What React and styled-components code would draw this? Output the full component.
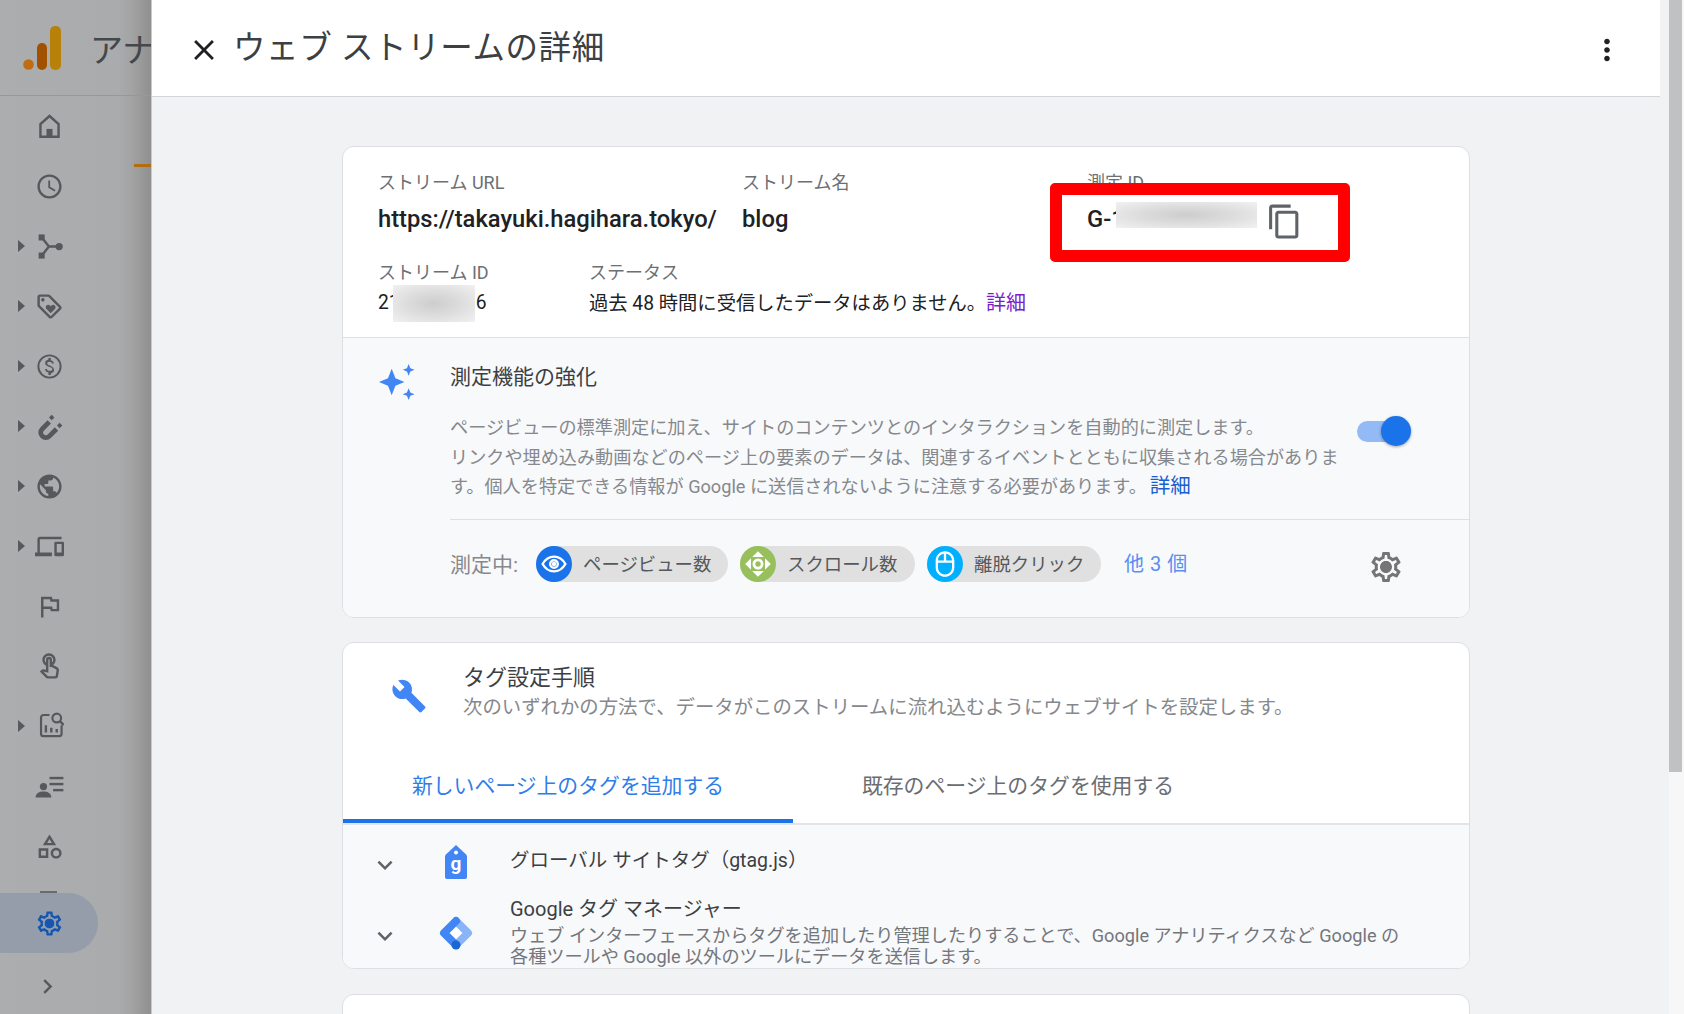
import React from "react";
import styled, { createGlobalStyle } from "styled-components";
import {
  MdOutlineSchedule,
  MdOutlineLoyalty,
  MdPublic,
  MdOutlineDevices,
  MdOutlineFlag,
  MdOutlineTouchApp,
  MdOutlineCategory,
  MdOutlineSettings,
  MdChevronRight,
  MdContentCopy,
  MdBuild,
  MdClose,
  MdMoreVert,
  MdOutlineMouse,
  MdExpandMore,
} from "react-icons/md";

const GlobalStyle = createGlobalStyle`
  html, body {
    margin: 0;
    padding: 0;
    height: 100%;
    overflow: hidden;
    font-family: Roboto, "Noto Sans CJK JP", sans-serif;
  }
`;

const Page = styled.div`
  display: flex;
  width: 100vw;
  height: 100vh;
  overflow: hidden;
  background: #f1f2f4;
`;

/* left nav, dimmed by the panel's scrim */
const Nav = styled.nav`
  flex: none;
  width: 151px;
  overflow: hidden;
  border-right: 1px solid #c8c9ca;
  background: linear-gradient(to right, #acadaf 0, #aaabad 118px, #a3a3a4 132px, #8f8f8f 151px);
`;

const NavHeader = styled.div`
  display: flex;
  align-items: center;
  height: 95px;
  padding-left: 23px;
  border-bottom: 1px solid #979899;
  white-space: nowrap;
  position: relative;

  svg {
    flex: none;
  }

  &::after {
    content: "";
    position: absolute;
    right: 0;
    bottom: -72px;
    width: 17px;
    height: 3px;
    background: #b06e10;
  }
`;

const NavTitle = styled.span`
  margin-left: 29px;
  font-size: 33px;
  color: #44474c;
`;

const NavItem = styled.div`
  display: grid;
  grid-template-columns: 35px 29px;
  align-items: center;
  height: 60px;
  color: #56585b;
  font-size: 29px;

  svg {
    display: block;
  }
`;

const Caret = styled.span`
  width: 0;
  height: 0;
  margin-left: 18px;
  border-left: 7px solid #56595e;
  border-top: 6px solid transparent;
  border-bottom: 6px solid transparent;
`;

const ActiveNav = styled(NavItem)`
  position: relative;
  width: 98px;
  margin-top: 17px;
  border-radius: 0 30px 30px 0;
  background: #959dab;
  color: #1557b0;

  &::before {
    content: "";
    position: absolute;
    left: 40px;
    top: -2px;
    width: 17px;
    height: 2px;
    background: #6a6b6d;
  }
`;

const CollapseNav = styled(NavItem)`
  margin-top: 3px;
  grid-template-columns: 33px 29px;
`;

/* outlined gear with the solid hub the reference shows */
const Gear = styled.span`
  position: relative;
  display: inline-flex;

  &::after {
    content: "";
    position: absolute;
    left: 35%;
    top: 35%;
    width: 30%;
    height: 30%;
    border-radius: 50%;
    background: currentColor;
  }
`;

const Panel = styled.main`
  flex: 1;
  min-width: 0;
  display: flex;
  flex-direction: column;
`;

const PanelHeader = styled.header`
  flex: none;
  display: flex;
  align-items: center;
  height: 97px;
  margin-right: 9px;
  padding: 0 36px 0 35px;
  box-sizing: border-box;
  background: #fff;
  border-bottom: 1px solid #d4d5d8;
  color: #202124;
`;

const CloseButton = styled.span`
  display: flex;
  font-size: 34px;
  margin-top: 3px;
`;

const PanelTitle = styled.h1`
  flex: 1;
  margin: -7px 0 0 12px;
  font-size: 32.5px;
  font-weight: 400;
  letter-spacing: 0.6px;
  color: #3c4043;
`;

const MoreButton = styled.span`
  display: flex;
  font-size: 34px;
  margin-top: 3px;
`;

const Content = styled.div`
  flex: 1;
  padding: 49px 0 0 190px;
  overflow: hidden;
`;

const Card = styled.section`
  position: relative;
  width: 1128px;
  margin-bottom: ${(p) => p.$gap || 0}px;
  box-sizing: border-box;
  border: 1px solid #dddfe3;
  border-radius: 12px;
  background: #fff;
  overflow: hidden;
  height: ${(p) => p.$height}px;
`;

const InfoSection = styled.div`
  padding: 24px 0 19px 35px;
  border-bottom: 1px solid #dddfe3;
`;

const InfoRow = styled.div`
  display: flex;
  margin-top: ${(p) => p.$top || 0}px;
`;

const Field = styled.div`
  width: ${(p) => p.$width}px;
  flex: none;
`;

const Label = styled.div`
  height: 24px;
  line-height: 24px;
  font-size: 18px;
  color: #6c6f74;
`;

const Value = styled.div`
  position: relative;
  height: 30px;
  line-height: 30px;
  margin-top: ${(p) => p.$top || 0}px;
  font-size: ${(p) => p.$size || 19.3}px;
  font-weight: ${(p) => p.$weight || 400};
  color: #202124;
  white-space: nowrap;
`;

const BlurPatch = styled.span`
  position: absolute;
  left: ${(p) => p.$left}px;
  top: ${(p) => p.$top}px;
  width: ${(p) => p.$width}px;
  height: ${(p) => p.$height}px;
  background: radial-gradient(ellipse at center, #cdcdcd 0, #dcdcdc 45%, #f1f1f1 100%);
`;

const TrailingDigit = styled.span`
  margin-left: 76px;
`;

const PurpleLink = styled.a`
  font-size: 20px;
  color: #7b1fc9;
`;

const IdCopy = styled.span`
  position: absolute;
  left: 179px;
  top: -1px;
  font-size: 37px;
  color: #5f6368;
  display: flex;
`;

const RedBox = styled.div`
  position: absolute;
  left: 707px;
  top: 36px;
  width: 300px;
  height: 79px;
  box-sizing: border-box;
  border: 12px solid #ff0000;
  border-radius: 5px;
`;

const FeatureSection = styled.div`
  display: flex;
  background: #f8f9fb;
`;

const FeatureIcon = styled.div`
  flex: none;
  width: 107px;
  padding: 26px 0 0 36px;
  box-sizing: border-box;
`;

const FeatureBody = styled.div`
  flex: 1;
  padding-top: 24px;
`;

const FeatureTitle = styled.h2`
  margin: 0;
  height: 30px;
  line-height: 30px;
  font-size: 21px;
  font-weight: 400;
  color: #3c4043;
`;

const DescRow = styled.div`
  display: flex;
  margin-top: 21px;
  padding-bottom: 17px;
  border-bottom: 1px solid #dfe0e3;
`;

const Desc = styled.p`
  flex: none;
  width: 907px;
  margin: 0;
  font-size: 18.15px;
  line-height: 29.5px;
  color: #85888d;
  white-space: nowrap;
`;

const BlueLink = styled.a`
  margin-left: 3px;
  font-size: 20.5px;
  color: #1a5fd0;
`;

const Toggle = styled.div`
  position: relative;
  width: 54px;
  height: 30px;
  margin-top: 3px;
`;

const ToggleTrack = styled.div`
  margin-top: 5px;
  width: 46px;
  height: 21px;
  border-radius: 11px;
  background: #93b9f6;
`;

const ToggleKnob = styled.div`
  position: absolute;
  left: 24px;
  top: 0;
  width: 30px;
  height: 30px;
  border-radius: 50%;
  background: #1a73e8;
  box-shadow: 0 1px 3px rgba(0, 0, 0, 0.35);
`;

const ChipRow = styled.div`
  display: flex;
  align-items: center;
  height: 97px;
  padding: 0 65px 9px 0;
  box-sizing: border-box;
`;

const ChipsLabel = styled.span`
  width: 86px;
  margin-top: -2px;
  font-size: 21px;
  color: #85888d;
`;

const Chip = styled.div`
  display: flex;
  align-items: center;
  width: ${(p) => p.$width}px;
  height: 36px;
  margin-right: ${(p) => p.$gap}px;
  border-radius: 18px;
  background: #e0e0e0;
  font-size: 18.4px;
  color: #55585d;
  white-space: nowrap;
`;

const ChipText = styled.span`
  margin-top: -2px;
`;

const ChipIcon = styled.span`
  flex: none;
  display: flex;
  align-items: center;
  justify-content: center;
  width: 36px;
  height: 36px;
  margin-right: 11px;
  border-radius: 50%;
  background: ${(p) => p.$color};
  color: #fff;
  font-size: 28px;
`;

const MoreLink = styled.a`
  flex: 1;
  margin-top: -2px;
  font-size: 20px;
  letter-spacing: 0.5px;
  color: #5a8ff0;
`;

const GearButton = styled(Gear)`
  margin-top: 6px;
  font-size: 36px;
  color: #757575;
`;

const GuideHeader = styled.div`
  display: flex;
  padding-top: 20px;
`;

const GuideIcon = styled.div`
  flex: none;
  width: 120px;
  padding: 15px 0 0 48px;
  box-sizing: border-box;
  color: #4285f4;
  font-size: 36px;
  line-height: 0;
`;

const GuideTitle = styled.h2`
  margin: 0;
  height: 30px;
  line-height: 30px;
  font-size: 22px;
  font-weight: 400;
  color: #3c4043;
`;

const GuideSub = styled.div`
  height: 30px;
  line-height: 30px;
  font-size: 19.4px;
  color: #85888d;
`;

const TabBar = styled.div`
  display: flex;
  margin-top: 23px;
  border-bottom: 2px solid #e3e4e6;
`;

const Tab = styled.div`
  width: 450px;
  height: 77px;
  box-sizing: border-box;
  padding-top: 25px;
  line-height: 30px;
  text-align: center;
  font-size: 20.85px;
  color: ${(p) => (p.$active ? "#2f7de8" : "#6a6d72")};
  border-bottom: 4px solid ${(p) => (p.$active ? "#1a73e8" : "transparent")};
`;

const TagList = styled.div`
  height: 200px;
  padding-top: 21px;
  background: #f8f9fb;
`;

const TagRow = styled.div`
  display: flex;
  align-items: flex-start;
  margin-bottom: 14px;
  padding-left: 27px;
`;

const RowChevron = styled.span`
  flex: none;
  display: flex;
  width: 30px;
  margin-top: ${(p) => p.$top}px;
  font-size: 30px;
  color: #5f6368;
`;

const RowIcon = styled.span`
  flex: none;
  display: flex;
  justify-content: center;
  width: 112px;
  margin-top: ${(p) => p.$top}px;
`;

const RowTitle = styled.div`
  height: 30px;
  line-height: 30px;
  font-size: ${(p) => p.$size || 20}px;
  color: #3c4043;
  margin-left: -2px;
`;

const RowDesc = styled.div`
  margin: 2px 0 0 -2px;
  font-size: 18.15px;
  line-height: 20.5px;
  color: #73767b;
  white-space: nowrap;
`;

const ScrollTrack = styled.div`
  flex: none;
  width: 15px;
  padding-right: 2px;
  box-sizing: border-box;
  background: #f7f7f8;
`;

const ScrollThumb = styled.div`
  height: 772px;
  background: #c0c1c3;
`;

const GaLogo = () => (
  <svg width="38" height="44" viewBox="0 0 38 44">
    <circle cx="5.5" cy="38.5" r="5.3" fill="#c06c12" />
    <rect x="14" y="17" width="10" height="27" rx="5" fill="#a05200" />
    <rect x="27" y="0" width="11" height="44" rx="5" fill="#b8820a" />
  </svg>
);

const HomeIcon = () => (
  <svg width="29" height="29" viewBox="0 0 24 24" fill="none" stroke="#56585b" strokeWidth="2">
    <path d="M12 3.300L4.500 10v10.500h15V10z" />
    <rect x="9.500" y="14" width="5" height="6.500" fill="#56585b" stroke="none" />
  </svg>
);

const FlowIcon = () => (
  <svg width="29" height="29" viewBox="0 0 24 24" fill="#56585b">
    <rect x="3" y="2" width="5" height="5" />
    <rect x="3" y="17" width="5" height="5" />
    <circle cx="20" cy="12" r="3" />
    <path d="M6 5l5.500 7L6 19M11.500 12H18" fill="none" stroke="#56585b" strokeWidth="2" />
  </svg>
);

const DollarIcon = () => (
  <svg width="29" height="29" viewBox="0 0 24 24" fill="#56585b">
    <path d="M12 2a10 10 0 100 20 10 10 0 000-20zm0 18.400a8.400 8.400 0 110-16.800 8.400 8.400 0 010 16.800z" />
    <path d="M12.300 11.100c-1.700-.4-2.200-.9-2.200-1.600 0-.8.8-1.400 2-1.400 1.300 0 1.800.6 1.900 1.500h1.600c-.1-1.300-.9-2.400-2.500-2.800V5h-2v1.300c-1.500.3-2.700 1.300-2.700 2.900 0 1.800 1.500 2.700 3.600 3.200 1.900.5 2.300 1.100 2.300 1.800 0 .5-.4 1.400-2.100 1.400-1.600 0-2.200-.7-2.300-1.600H8.300c.1 1.700 1.400 2.600 2.800 2.900V19h2v-1.300c1.500-.3 2.700-1.200 2.700-2.800 0-2.200-1.900-3-3.500-3.800z" />
  </svg>
);

const MagnetIcon = () => (
  <svg width="29" height="29" viewBox="0 0 24 24" fill="#56585b">
    <path d="M11.800 8.200L6 14a4.200 4.200 0 005.940 5.940L17.800 14.080" fill="none" stroke="#56585b" strokeWidth="4" />
    <rect x="12.200" y="2.900" width="3.200" height="3.200" transform="rotate(45 13.800 4.500)" />
    <rect x="18.800" y="9.600" width="3.200" height="3.200" transform="rotate(45 20.400 11.200)" />
  </svg>
);

const ReportIcon = () => (
  <svg width="29" height="29" viewBox="0 0 24 24" fill="none" stroke="#56585b" strokeWidth="1.800">
    <path d="M12 2.500H7a2 2 0 00-2 2V18a2 2 0 002 2h13a2 2 0 002-2v-7" />
    <path d="M9 17v-6M13.500 17v-4M18 17v-3" strokeWidth="2" />
    <circle cx="18" cy="5" r="3.600" />
    <path d="M20.600 7.600L23.800 10.800" strokeWidth="2" />
  </svg>
);

const AudienceIcon = () => (
  <svg width="29" height="29" viewBox="0 0 24 24" fill="#56585b">
    <circle cx="7" cy="12" r="3" />
    <path d="M0.500 21c0-3.200 3-4.800 6.500-4.800s6.500 1.600 6.500 4.800z" />
    <rect x="12" y="4" width="11.500" height="2" />
    <rect x="12" y="9" width="11.500" height="2" />
    <rect x="15" y="14" width="8.500" height="2" />
  </svg>
);

const Sparkles = () => (
  <svg width="36" height="36" viewBox="0 0 34 34" fill="#4285f4">
    <path d="M12 4.500L15.500 13.500L24 17L15.500 20.500L12 29.500L8.500 20.500L0 17L8.500 13.500Z" />
    <path d="M28 0L29.600 3.900L33.600 5.500L29.600 7.100L28 11L26.400 7.100L22.400 5.500L26.400 3.900Z" />
    <path d="M28 23L29.600 26.900L33.600 28.500L29.600 30.100L28 34L26.400 30.100L22.400 28.500L26.400 26.900Z" />
  </svg>
);

const EyeIcon = () => (
  <svg width="26" height="26" viewBox="0 0 24 24" fill="none" stroke="#fff" strokeWidth="2.200">
    <path d="M1.500 12C4 7.500 7.800 5.200 12 5.200s8 2.300 10.500 6.800C20 16.500 16.200 18.800 12 18.800S4 16.500 1.500 12z" />
    <circle cx="12" cy="12" r="3.500" />
    <circle cx="12" cy="12" r="1" fill="#fff" />
  </svg>
);

const ScrollIcon = () => (
  <svg width="28" height="28" viewBox="0 0 24 24" fill="#fff">
    <path d="M12 1l5 5H7zM12 23l-5-5h10zM1 12l5-5v10zM23 12l-5 5V7z" />
    <circle cx="12" cy="12" r="3.500" fill="none" stroke="#fff" strokeWidth="2.400" />
  </svg>
);

const GtagIcon = () => (
  <svg width="24" height="34" viewBox="0 0 24 34">
    <path d="M12 0l9 8.500c1.500 1.200 2 2 2 3.500v20c0 1-.8 2-2 2H3c-1.200 0-2-1-2-2V12c0-1.500.5-2.300 2-3.500z" fill="#4285f4" />
    <circle cx="12" cy="7.500" r="2" fill="#fff" />
    <text x="12" y="25" textAnchor="middle" fontFamily="Roboto, sans-serif" fontWeight="700" fontSize="19" fill="#fff">g</text>
  </svg>
);

const GtmIcon = () => (
  <svg width="34" height="34" viewBox="0 0 34 34" fill="none" strokeWidth="8" strokeLinecap="round" strokeLinejoin="round">
    <path d="M17 8l9 9-9 9-9-9z" fill="#fff" />
    <path d="M17 5l12 12-12 12" stroke="#8ab4f8" />
    <path d="M17 5L5 17l12 12" stroke="#4285f4" />
    <circle cx="17" cy="29" r="4.500" fill="#1967d2" />
  </svg>
);

const navItems = [
  { icon: <HomeIcon /> },
  { icon: <MdOutlineSchedule /> },
  { icon: <FlowIcon />, caret: true },
  { icon: <MdOutlineLoyalty />, caret: true },
  { icon: <DollarIcon />, caret: true },
  { icon: <MagnetIcon />, caret: true },
  { icon: <MdPublic />, caret: true },
  { icon: <MdOutlineDevices />, caret: true },
  { icon: <MdOutlineFlag /> },
  { icon: <MdOutlineTouchApp /> },
  { icon: <ReportIcon />, caret: true },
  { icon: <AudienceIcon /> },
  { icon: <MdOutlineCategory /> },
];

export default function App() {
  return (
    <Page>
      <GlobalStyle />
      <Nav>
        <NavHeader>
          <GaLogo />
          <NavTitle>アナリティクス</NavTitle>
        </NavHeader>
        {navItems.map((item, i) => (
          <NavItem key={i}>
            {item.caret ? <Caret /> : <span />}
            {item.icon}
          </NavItem>
        ))}
        <ActiveNav>
          <span />
          <Gear>
            <MdOutlineSettings />
          </Gear>
        </ActiveNav>
        <CollapseNav>
          <span />
          <MdChevronRight />
        </CollapseNav>
      </Nav>

      <Panel>
        <PanelHeader>
          <CloseButton>
            <MdClose />
          </CloseButton>
          <PanelTitle>ウェブ ストリームの詳細</PanelTitle>
          <MoreButton>
            <MdMoreVert />
          </MoreButton>
        </PanelHeader>

        <Content>
          <Card $height={472} $gap={24}>
            <InfoSection>
              <InfoRow>
                <Field $width={364}>
                  <Label>ストリーム URL</Label>
                  <Value $top={9} $size={23.75} $weight={500}>https://takayuki.hagihara.tokyo/</Value>
                </Field>
                <Field $width={345}>
                  <Label>ストリーム名</Label>
                  <Value $top={9} $size={23.75} $weight={500}>blog</Value>
                </Field>
                <Field $width={320}>
                  <Label>測定 ID</Label>
                  <Value $top={9} $size={23.75} $weight={500}>
                    G-1
                    <BlurPatch $left={29} $top={-2} $width={141} $height={26} />
                    <IdCopy>
                      <MdContentCopy />
                    </IdCopy>
                  </Value>
                </Field>
              </InfoRow>
              <InfoRow $top={27}>
                <Field $width={211}>
                  <Label>ストリーム ID</Label>
                  <Value $top={3}>
                    21
                    <BlurPatch $left={15} $top={-3} $width={82} $height={37} />
                    <TrailingDigit>6</TrailingDigit>
                  </Value>
                </Field>
                <Field $width={600}>
                  <Label>ステータス</Label>
                  <Value $top={3}>
                    過去 48 時間に受信したデータはありません。<PurpleLink>詳細</PurpleLink>
                  </Value>
                </Field>
              </InfoRow>
            </InfoSection>

            <FeatureSection>
              <FeatureIcon>
                <Sparkles />
              </FeatureIcon>
              <FeatureBody>
                <FeatureTitle>測定機能の強化</FeatureTitle>
                <DescRow>
                  <Desc>
                    ページビューの標準測定に加え、サイトのコンテンツとのインタラクションを自動的に測定します。
                    <br />
                    リンクや埋め込み動画などのページ上の要素のデータは、関連するイベントとともに収集される場合がありま
                    <br />
                    す。個人を特定できる情報が Google に送信されないように注意する必要があります。<BlueLink>詳細</BlueLink>
                  </Desc>
                  <Toggle>
                    <ToggleTrack />
                    <ToggleKnob />
                  </Toggle>
                </DescRow>
                <ChipRow>
                  <ChipsLabel>測定中:</ChipsLabel>
                  <Chip $width={192} $gap={12}>
                    <ChipIcon $color="#1a73e8">
                      <EyeIcon />
                    </ChipIcon>
                    <ChipText>ページビュー数</ChipText>
                  </Chip>
                  <Chip $width={175} $gap={12}>
                    <ChipIcon $color="#97c05c">
                      <ScrollIcon />
                    </ChipIcon>
                    <ChipText>スクロール数</ChipText>
                  </Chip>
                  <Chip $width={174} $gap={23}>
                    <ChipIcon $color="#00b0ff">
                      <MdOutlineMouse />
                    </ChipIcon>
                    <ChipText>離脱クリック</ChipText>
                  </Chip>
                  <MoreLink>他 3 個</MoreLink>
                  <GearButton>
                    <MdOutlineSettings />
                  </GearButton>
                </ChipRow>
              </FeatureBody>
            </FeatureSection>
            <RedBox />
          </Card>

          <Card $height={327} $gap={25}>
            <GuideHeader>
              <GuideIcon>
                <MdBuild />
              </GuideIcon>
              <div>
                <GuideTitle>タグ設定手順</GuideTitle>
                <GuideSub>次のいずれかの方法で、データがこのストリームに流れ込むようにウェブサイトを設定します。</GuideSub>
              </div>
            </GuideHeader>
            <TabBar>
              <Tab $active>新しいページ上のタグを追加する</Tab>
              <Tab>既存のページ上のタグを使用する</Tab>
            </TabBar>
            <TagList>
              <TagRow>
                <RowChevron $top={4}>
                  <MdExpandMore />
                </RowChevron>
                <RowIcon $top={-1}>
                  <GtagIcon />
                </RowIcon>
                <RowTitle $size={19.5}>グローバル サイトタグ（gtag.js）</RowTitle>
              </TagRow>
              <TagRow>
                <RowChevron $top={27}>
                  <MdExpandMore />
                </RowChevron>
                <RowIcon $top={22}>
                  <GtmIcon />
                </RowIcon>
                <div>
                  <RowTitle>Google タグ マネージャー</RowTitle>
                  <RowDesc>
                    ウェブ インターフェースからタグを追加したり管理したりすることで、Google アナリティクスなど Google の
                    <br />
                    各種ツールや Google 以外のツールにデータを送信します。
                  </RowDesc>
                </div>
              </TagRow>
            </TagList>
          </Card>

          <Card $height={200} />
        </Content>
      </Panel>

      <ScrollTrack>
        <ScrollThumb />
      </ScrollTrack>
    </Page>
  );
}
